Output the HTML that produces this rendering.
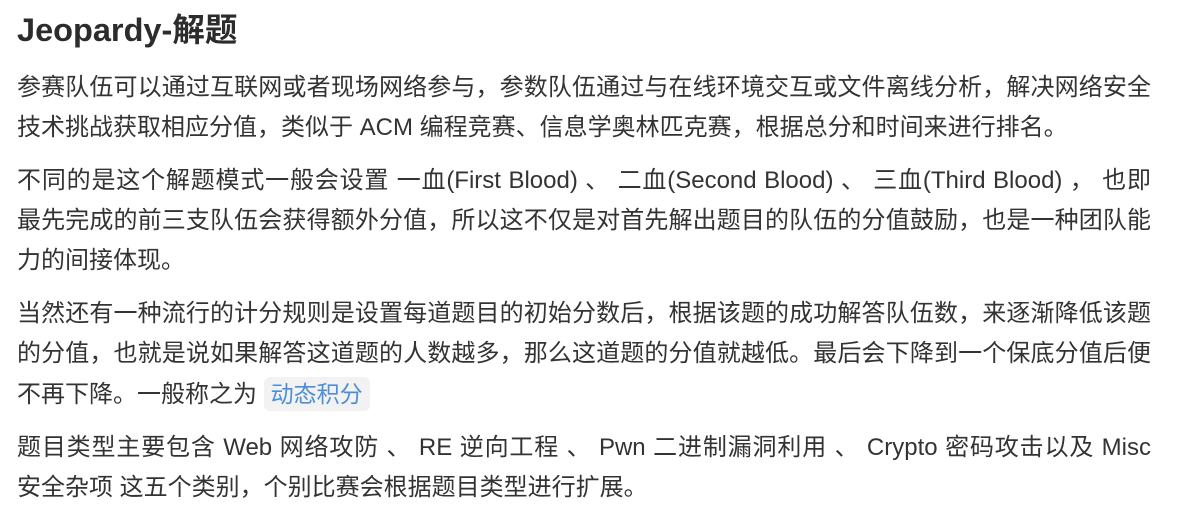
<!DOCTYPE html>
<html><head><meta charset="utf-8"><style>
body{margin:0;background:#fff;width:1189px;height:503px;overflow:hidden;font-family:"Liberation Sans","Noto Sans CJK SC",sans-serif;color:#333;}
.w{position:absolute;left:17px;width:1134px;top:0;}
h1{margin:0;position:absolute;top:8px;font-size:32.5px;line-height:44px;font-weight:bold;color:#2c2c2c;white-space:nowrap;}
p{margin:0 0 13px 0;font-size:24px;line-height:40px;}
p span{display:block;white-space:nowrap;}
p span.j{text-align:justify;text-align-last:justify;white-space:normal;}
.t{position:absolute;top:68px;width:1134px;}
code{font-family:inherit;color:#4d8fd6;background:#f2f2f2;border-radius:6px;padding:4px 7px;font-size:23px;}
</style></head><body>
<div class="w">
<h1>Jeopardy-解题</h1>
<div class="t">
<p><span class="j">参赛队伍可以通过互联网或者现场网络参与，参数队伍通过与在线环境交互或文件离线分析，解决网络安全</span><span>技术挑战获取相应分值，类似于 ACM 编程竞赛、信息学奥林匹克赛，根据总分和时间来进行排名。</span></p>
<p><span class="j">不同的是这个解题模式一般会设置 一血(First Blood) 、 二血(Second Blood) 、 三血(Third Blood) ， 也即</span><span class="j">最先完成的前三支队伍会获得额外分值，所以这不仅是对首先解出题目的队伍的分值鼓励，也是一种团队能</span><span>力的间接体现。</span></p>
<p><span class="j">当然还有一种流行的计分规则是设置每道题目的初始分数后，根据该题的成功解答队伍数，来逐渐降低该题</span><span class="j">的分值，也就是说如果解答这道题的人数越多，那么这道题的分值就越低。最后会下降到一个保底分值后便</span><span>不再下降。一般称之为 <code>动态积分</code></span></p>
<p><span class="j">题目类型主要包含 Web 网络攻防 、 RE 逆向工程 、 Pwn 二进制漏洞利用 、 Crypto 密码攻击以及 Misc</span><span>安全杂项 这五个类别，个别比赛会根据题目类型进行扩展。</span></p>
</div></div>
</body></html>
